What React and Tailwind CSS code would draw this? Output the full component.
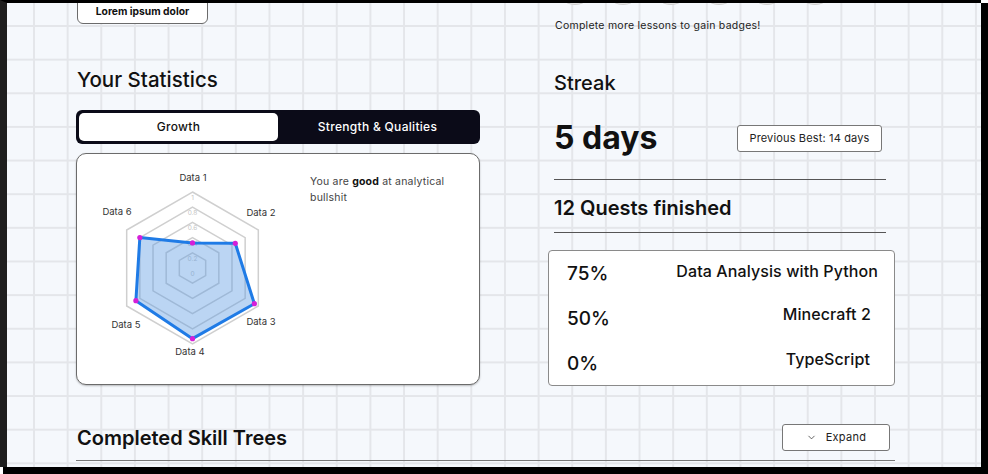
import React from "react";
import { ChevronDown } from "lucide-react";

const values = [0.33, 0.65, 0.94, 0.93, 0.86, 0.8];
const labels = [
    { text: "Data 1", x: 116, y: 24 },
    { text: "Data 2", x: 184, y: 59 },
    { text: "Data 3", x: 184, y: 168 },
    { text: "Data 4", x: 113, y: 198 },
    { text: "Data 5", x: 49, y: 171 },
    { text: "Data 6", x: 40, y: 58 },
];

const quests = [
    { pct: "75%", name: "Data Analysis with Python", cls: "mr-[16px] mt-0" },
    { pct: "50%", name: "Minecraft 2", cls: "mr-[23px] mt-[-2px]" },
    { pct: "0%", name: "TypeScript", cls: "mr-[24px] mt-[-2px]" },
];

function RadarChart() {
    const cx = 115.5;
    const cy = 114;
    const R = 76;
    const pt = (i, r) => {
        const a = (Math.PI / 180) * (-90 + 60 * i);
        return [cx + r * Math.cos(a), cy + r * Math.sin(a)];
    };
    const hex = (r) => [0, 1, 2, 3, 4, 5].map((i) => pt(i, r).join(",")).join(" ");
    const data = values.map((v, i) => pt(i, v * R));

    return (
        <svg width="233" height="230" viewBox="0 0 233 230" className="shrink-0">
            {[1, 0.8, 0.6, 0.4, 0.2].map((l) => (
                <polygon key={l} points={hex(l * R)} fill="none" stroke="#cfcfcf" strokeWidth="1.5" />
            ))}
            {[0, 0.2, 0.4, 0.6, 0.8, 1].map((l) => (
                <text key={l} x={cx} y={cy - l * R + 8} fontSize="6.5" fill="#c4c4c4" textAnchor="middle">
                    {l}
                </text>
            ))}
            <polygon
                points={data.map((p) => p.join(",")).join(" ")}
                fill="rgba(94,156,226,0.42)"
                stroke="#1f7be6"
                strokeWidth="3"
                strokeLinejoin="round"
            />
            {data.map((p, i) => (
                <circle key={i} cx={p[0]} cy={p[1]} r="2.6" fill="#d51fd8" />
            ))}
            {labels.map((l) => (
                <text key={l.text} x={l.x} y={l.y} fontSize="9.5" fill="#333" textAnchor="middle" dominantBaseline="middle">
                    {l.text}
                </text>
            ))}
        </svg>
    );
}

export default function App() {
    return (
        <div className="w-[988px] h-[474px] bg-white overflow-hidden font-['Inter',sans-serif] text-[#111]">
            <div className="w-[981px] h-[467px] border-t-[3px] border-l-[7px] border-t-black border-l-[#1e1e1e] shadow-[5px_5px_0_2px_#000] overflow-hidden bg-[#f5f8fc] [background-image:linear-gradient(to_right,#e4e6ea_2px,transparent_2px),linear-gradient(to_bottom,#e4e6ea_2px,transparent_2px)] [background-size:33.65px_33.65px] [background-position:26px_22px]">
                <div className="pl-[69px]">
                    <div className="flex">
                        {/* Left column */}
                        <div className="w-[404px] flex flex-col">
                            <button className="mt-[-9px] ml-[1px] w-[131px] h-[30px] pt-[6px] bg-white border-[1.5px] border-[#6b6b6b] rounded-[6px] text-[10.3px] font-bold">
                                Lorem ipsum dolor
                            </button>

                            <h2 className="mt-[42px] ml-[1px] text-[20.5px] leading-[28px] font-medium">Your Statistics</h2>

                            <div className="mt-[16px] h-[34px] bg-[#0b0b18] rounded-[6px] p-[3px] grid grid-cols-2">
                                <div className="bg-white rounded-[5px] flex items-center justify-center text-[12px] tracking-[0.3px] font-medium">
                                    Growth
                                </div>
                                <div className="flex items-center justify-center text-[12px] tracking-[0.3px] font-medium text-white">
                                    Strength &amp; Qualities
                                </div>
                            </div>

                            <div className="mt-[9px] h-[232px] bg-white border border-[#6b6b6b] rounded-[10px] shadow-[0_1px_2px_rgba(0,0,0,0.25)] flex">
                                <RadarChart />
                                <div className="pt-[20px] w-[150px] text-[10.5px] tracking-[0.2px] leading-[16px] text-[#444]">
                                    You are <span className="font-bold text-[#111]">good</span> at analytical bullshit
                                </div>
                            </div>
                        </div>

                        {/* Right column */}
                        <div className="ml-[68px] w-[347px] flex flex-col">
                            <div className="mt-[-38px] ml-[7px] flex gap-[8px]">
                                {[0, 1, 2, 3, 4, 5].map((i) => (
                                    <div key={i} className="w-[40px] h-[40px] rounded-full bg-[#e8e8e8] border-[1.5px] border-[#cfcfcf]" />
                                ))}
                            </div>
                            <p className="mt-[14px] ml-[7px] text-[10.5px] tracking-[0.25px] leading-[14px] text-[#222]">
                                Complete more lessons to gain badges!
                            </p>

                            <h2 className="mt-[36px] ml-[6px] text-[20px] leading-[28px] font-medium">Streak</h2>

                            <div className="mt-[23px] ml-[6px] mr-[13px] h-[36px] flex items-center justify-between">
                                <span className="text-[32px] leading-[36px] font-bold">5 days</span>
                                <button className="w-[145px] h-[27px] bg-white border border-[#777] rounded-[3px] text-[11px] tracking-[0.15px] text-[#222]">
                                    Previous Best: 14 days
                                </button>
                            </div>

                            <div className="mt-[23px] ml-[6px] mr-[9px] h-px bg-[#555]" />

                            <h2 className="mt-[15px] ml-[6px] text-[20px] leading-[26px] font-semibold">12 Quests finished</h2>

                            <div className="mt-[11px] ml-[6px] mr-[9px] h-px bg-[#555]" />

                            <div className="mt-[17px] h-[136px] bg-white border border-[#8a8a8a] rounded-[4px] pt-[9px] pl-[18px] flex flex-col gap-[18px]">
                                {quests.map((q) => (
                                    <div key={q.pct} className="flex items-start justify-between h-[27px]">
                                        <span className="text-[19px] leading-[27px] font-medium">{q.pct}</span>
                                        <span className={`text-[16px] tracking-[0.1px] leading-[22px] font-medium ${q.cls}`}>{q.name}</span>
                                    </div>
                                ))}
                            </div>
                        </div>
                    </div>

                    {/* Bottom row */}
                    <div className="mt-[38px] w-[819px] flex items-center justify-between">
                        <h2 className="ml-[1px] text-[20px] leading-[26px] font-semibold">Completed Skill Trees</h2>
                        <button className="mr-[5px] w-[108px] h-[27px] bg-white border border-[#777] rounded-[3px] flex items-center justify-center gap-[9px] text-[11px] tracking-[0.3px] text-[#222]">
                            <ChevronDown size={11} strokeWidth={1.5} />
                            Expand
                        </button>
                    </div>
                    <div className="mt-[9px] w-[819px] h-px bg-[#777]" />
                </div>
            </div>
        </div>
    );
}
